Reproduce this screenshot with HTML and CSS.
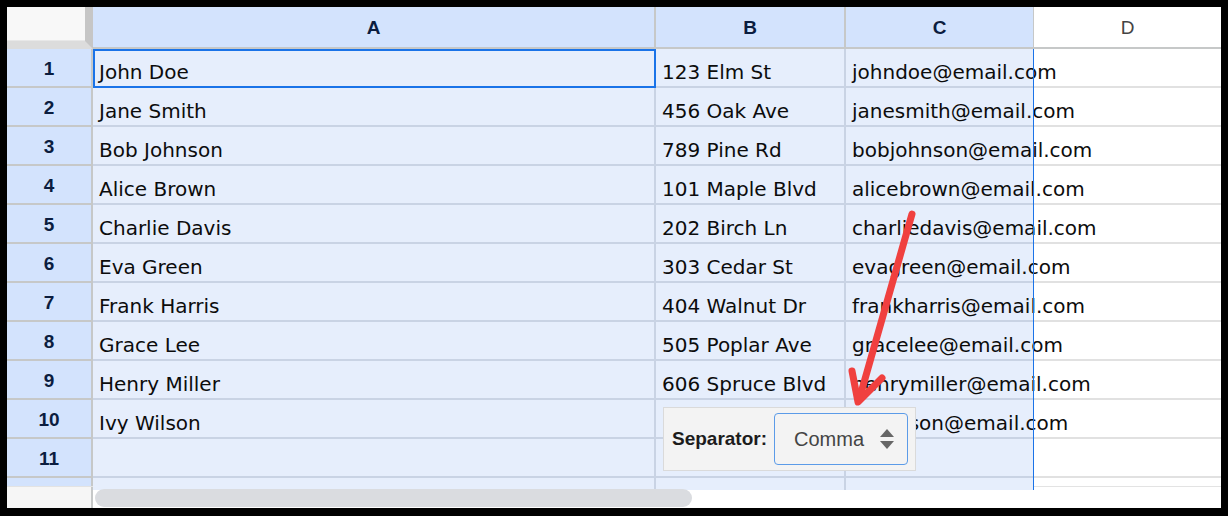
FILE: index.html
```html
<!DOCTYPE html>
<html lang="en">
<head>
	<meta charset="UTF-8">
	<title>sheet</title>
	<link rel="stylesheet" href="styles.css">
</head>
<body>

	<div class="sheet">
		<div class="grid" id="grid">
			<div class="corner"></div>
			<div class="col-head sel">A</div>
			<div class="col-head sel">B</div>
			<div class="col-head sel">C</div>
			<div class="col-head">D</div>
			<!-- rows in -->
		</div>
		<div class="scroll-bar">
			<div class="scroll-left"></div>
			<div class="scroll-track">
				<div class="thumb"></div>
			</div>
		</div>

		<div class="sel-edge"></div>

		<div class="sep-box">
			<span class="sep-label">Separator:</span>
			<div class="sep-select">
				<span>Comma</span>
				<svg class="spin" width="14" height="20" viewBox="0 0 14 20">
					<path d="M7 0 L14 8 L0 8 Z" fill="#666"/>
					<path d="M0 12 L14 12 L7 20 Z" fill="#666"/>
				</svg>
			</div>
		</div>
	</div>

	<svg class="arrow" width="1228" height="516" viewBox="0 0 1228 516">
		<g stroke="#f0403f" stroke-width="7" stroke-linecap="round" stroke-linejoin="round" fill="none">
			<path d="M912 214 L859 400"/>
			<path d="M852 371 L858 402 L882 378"/>
		</g>
	</svg>

	<script>
		var people = [
			['John Doe', '123 Elm St', 'johndoe@email.com'],
			['Jane Smith', '456 Oak Ave', 'janesmith@email.com'],
			['Bob Johnson', '789 Pine Rd', 'bobjohnson@email.com'],
			['Alice Brown', '101 Maple Blvd', 'alicebrown@email.com'],
			['Charlie Davis', '202 Birch Ln', 'charliedavis@email.com'],
			['Eva Green', '303 Cedar St', 'evagreen@email.com'],
			['Frank Harris', '404 Walnut Dr', 'frankharris@email.com'],
			['Grace Lee', '505 Poplar Ave', 'gracelee@email.com'],
			['Henry Miller', '606 Spruce Blvd', 'henrymiller@email.com'],
			['Ivy Wilson', '', 'ivywilson@email.com'],
			['', '', '']
		];

		var html = '';
		people.forEach(function (row, index) {
			html += '<div class="row-head">' + (index + 1) + '</div>';
			row.forEach(function (val, i) {
				var cls = 'cell sel';
				if (index === 0 && i === 0) {
					cls += ' active';
				}
				html += '<div class="' + cls + '">' + val + '</div>';
			});
			html += '<div class="cell"></div>';
		});
		// cut off row at the bottom
		html += '<div class="row-head part"></div>' +
			'<div class="cell sel part"></div>' +
			'<div class="cell sel part"></div>' +
			'<div class="cell sel part"></div>' +
			'<div class="cell part"></div>';

		document.querySelector('#grid').insertAdjacentHTML('beforeend', html);
	</script>
</body>
</html>
```

FILE: styles.css
```css
*{
	margin: 0;
	padding: 0;
	box-sizing: border-box;
}
body{
	background: #000;
	font-family: "DejaVu Sans", Verdana, sans-serif;
}
.sheet{
	position: relative;
	margin: 7px;
	width: 1214px;
	height: 501px;
	background: #fff;
	overflow: hidden;
}
.grid{
	display: grid;
	grid-template-columns: 86px 563px 190px 188px 187px;
	grid-template-rows: 42px repeat(11, 39px) 8px;
}
.corner{
	background: #f8f8f8;
	border-right: 8px solid #c6c6c6;
	border-bottom: 8px solid #dcdcdc;
	box-shadow: inset 0 -1px 0 #e8e8e8;
}
.col-head{
	display: flex;
	align-items: center;
	justify-content: center;
	padding-top: 1px;
	font: 19px "Liberation Sans", Arial, sans-serif;
	color: #444;
	border-bottom: 2px solid #c6c8c8;
}
.col-head.sel{
	background: #d3e3fd;
	color: #0b1d3f;
	font-weight: bold;
	font-size: 19px;
	border-right: 2px solid #c6c8c8;
}
.col-head.sel:nth-child(4){
	border-right-width: 1px;
}
.row-head{
	display: flex;
	align-items: center;
	justify-content: center;
	padding-top: 2px;
	background: #d3e3fd;
	color: #0b1d3f;
	font: bold 19px "Liberation Sans", Arial, sans-serif;
	border-right: 2px solid #c6c8c8;
	border-bottom: 2px solid #c6c8c8;
}
.cell{
	padding: 12px 6px 0;
	font-size: 20px;
	line-height: 23px;
	color: #0c0c0c;
	white-space: nowrap;
	border-bottom: 2px solid #e1e1e1;
}
.cell.sel{
	background: #e6eefc;
	border-right: 2px solid #c9d3e4;
	border-bottom-color: #c9d3e4;
}
.cell.sel:nth-child(5n+4){
	border-right: 1px solid #1a73e8;
}
.cell.active{
	outline: 2px solid #1a73e8;
	outline-offset: -2px;
	border-bottom-color: #1a73e8;
}
.part{
	border-bottom: 0;
}
.row-head.part{
	border-bottom: 0;
	padding: 0;
}
.scroll-bar{
	display: flex;
	height: 22px;
	border-top: 1px solid #e3e3e3;
}
.scroll-left{
	width: 86px;
	background: #f6f6f6;
	border-right: 2px solid #c6c8c8;
}
.scroll-track{
	flex: 1;
	padding: 2px 2px 0;
}
.thumb{
	width: 597px;
	height: 18px;
	border-radius: 9px;
	background: #dadce0;
}
.sel-edge{
	position: absolute;
	left: 1026px;
	top: 42px;
	width: 1px;
	height: 437px;
	background: #1a73e8;
}
.sep-box{
	position: absolute;
	left: 656px;
	top: 400px;
	width: 253px;
	height: 64px;
	display: flex;
	align-items: center;
	padding-left: 8px;
	background: #f3f3f3;
	border: 1px solid #dadada;
}
.sep-label{
	font: bold 19px "Liberation Sans", Arial, sans-serif;
	color: #1c1c1c;
	margin-right: 7px;
}
.sep-select{
	display: flex;
	align-items: center;
	width: 134px;
	height: 52px;
	padding-left: 19px;
	border: 1px solid #5b9be8;
	border-radius: 4px;
	font: 20px "Liberation Sans", Arial, sans-serif;
	color: #444;
}
.sep-select .spin{
	margin-left: 16px;
}
.arrow{
	position: absolute;
	left: 0;
	top: 0;
	pointer-events: none;
}
```
